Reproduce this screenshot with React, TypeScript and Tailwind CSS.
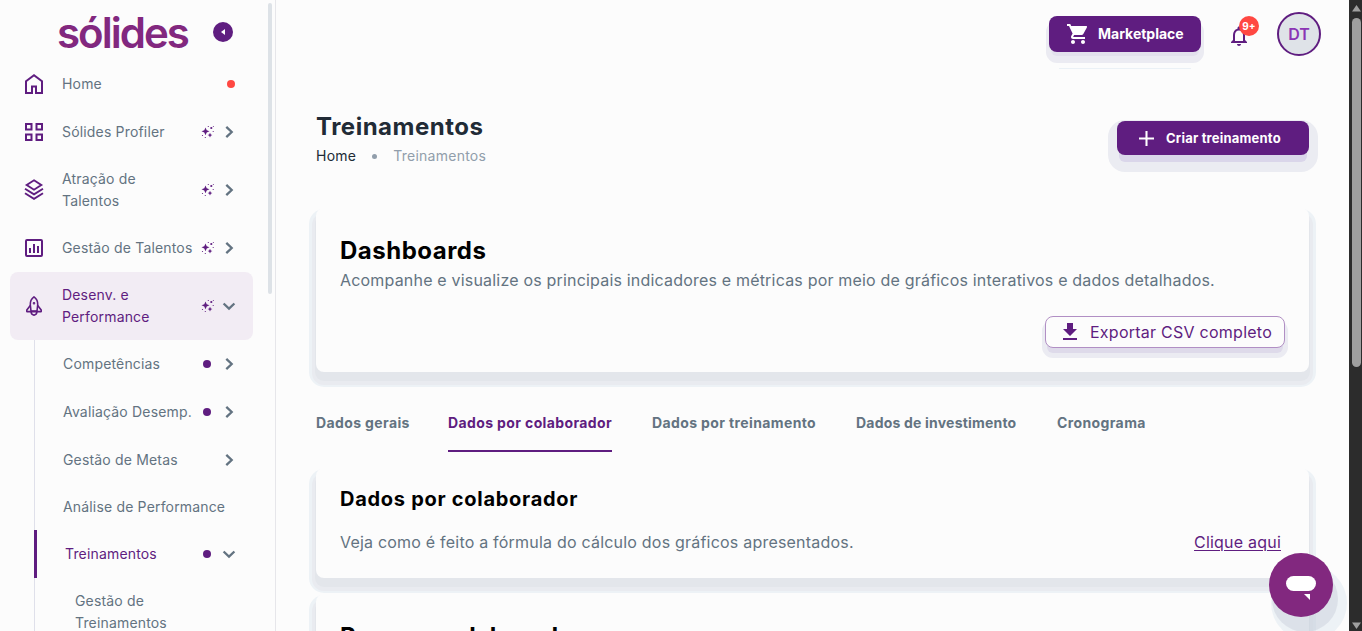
import type { ReactNode } from "react";
import { MdFileDownload, MdShoppingCart, MdOutlineNotifications } from "react-icons/md";

const PURPLE = "#5f1d80";

const CARD_SHADOW =
  "shadow-[0_8px_0_1px_#e3e6eb,0_9px_0_4px_#e9ebf0,0_8px_0_7px_#edf2f6]";

function MenuIcon({ children }: { children: ReactNode }) {
  return (
    <svg
      viewBox="0 0 24 24"
      width={24}
      height={24}
      fill="none"
      stroke={PURPLE}
      strokeWidth={2}
      className="shrink-0"
    >
      {children}
    </svg>
  );
}

const icons = {
  home: (
    <MenuIcon>
      <path d="M4 9.300 12 3.200l8 6.100V21h-6v-6.500h-4V21H4z" />
    </MenuIcon>
  ),
  grid: (
    <MenuIcon>
      <path d="M4 4h5.500v5.500H4zM14.500 4H20v5.500h-5.500zM4 14.500h5.500V20H4zM14.500 14.500H20V20h-5.500z" />
    </MenuIcon>
  ),
  layers: (
    <MenuIcon>
      <path d="M12 2.300 19.300 7 12 11.700 4.700 7z" strokeWidth={1.9} />
      <path d="M3 10.800 12 16.400l9-5.600M3 15.200 12 20.800l9-5.600" strokeWidth={1.9} />
    </MenuIcon>
  ),
  chart: (
    <MenuIcon>
      <rect x="4" y="4" width="16" height="16" rx="1" />
      <path d="M8 12v5M12 8v9M16 10v7" />
    </MenuIcon>
  ),
  rocket: (
    <MenuIcon>
      <g strokeWidth={1.6} strokeLinejoin="round">
        <path d="M12 2.800c-2.600 1.800-3.900 4.600-3.700 8L9 17h6l.7-6.200c.2-3.400-1.100-6.200-3.700-8z" />
        <path d="M8.300 11.500 4.800 16v1.600h14.400V16l-3.500-4.500M9 17.600c0 1.700 1 3.200 3 3.700 2-.5 3-2 3-3.700" />
        <circle cx="12" cy="9.200" r=".5" />
      </g>
    </MenuIcon>
  ),
};

function Sparkles() {
  return (
    <svg viewBox="0 0 14 14" width={14} height={14} fill={PURPLE} className="shrink-0">
      <path d="M4.500 2.400 5.700 5.300 8.500 6.300 5.700 7.400 4.500 10.200 3.300 7.400.5 6.300 3.300 5.300z" />
      <path d="M9 7.800l.8 1.600 1.600.7-1.600.7L9 12.400l-.8-1.600-1.600-.7 1.600-.7z" />
      <circle cx="10.300" cy="3" r="1.100" />
      <circle cx="7.300" cy="1.500" r=".6" />
      <circle cx="12.200" cy="6.500" r=".6" />
      <circle cx="1.500" cy="10.500" r=".6" />
      <circle cx="4.300" cy="12.500" r=".6" />
      <circle cx="12.300" cy="1.500" r=".5" />
    </svg>
  );
}

function Chevron({ open }: { open?: boolean }) {
  return (
    <svg
      viewBox="0 0 16 16"
      width={16}
      height={16}
      fill="none"
      stroke="#637381"
      strokeWidth={2.3}
      className="shrink-0"
    >
      <path d={open ? "M2.600 5.500 8 10.600l5.400-5.100" : "M5.300 2.800 10.700 8l-5.400 5.200"} />
    </svg>
  );
}

const menu = [
  { label: "Sólides Profiler", icon: icons.grid, h: "h-12" },
  { label: "Atração de Talentos", icon: icons.layers, h: "h-[68px]" },
  { label: "Gestão de Talentos", icon: icons.chart, h: "h-12" },
  { label: "Desenv. e Performance", icon: icons.rocket, h: "h-[68px]", active: true },
];

const submenu = [
  { label: "Competências", dot: true, chevron: true, h: "h-12" },
  { label: "Avaliação Desemp.", dot: true, chevron: true, h: "h-12" },
  { label: "Gestão de Metas", chevron: true, h: "h-12" },
  { label: "Análise de Performance", h: "h-[46px]" },
];

function Dot() {
  return <span className="mr-[3px] size-2 rounded-full bg-[#5f1d80]" />;
}

function Sidebar() {
  return (
    <aside className="relative h-full w-[276px] shrink-0 overflow-hidden border-r border-[#e6e6ea] text-sm leading-[22px] tracking-[0.17px] text-[#637381]">
      <div className="flex h-[60px] items-start pl-[58px]">
        <svg width={132} height={60} className="shrink-0 overflow-visible">
          <text
            x="-1"
            y="47.500"
            textLength="133"
            fontFamily="Inter, sans-serif"
            fontSize="42"
            fontWeight="600"
            fill="#82287f"
          >
            sólides
          </text>
        </svg>
        <span className="mt-[22px] ml-[23px] flex size-5 items-center justify-center rounded-full bg-[#5f1d80]">
          <svg viewBox="0 0 6 6" width={6} height={6} fill="#fff">
            <path d="M5 0v6L1 3z" />
          </svg>
        </span>
      </div>

      <nav className="px-[10px]">
        <div className="flex h-12 w-[243px] items-center pl-3">
          {icons.home}
          <span className="ml-4 flex-1">Home</span>
          <span className="mr-[18px] size-2 rounded-full bg-[#ff4842]" />
        </div>
        {menu.map((item) => (
          <div
            key={item.label}
            className={`flex w-[243px] items-center pl-3 pr-4 ${item.h} ${
              item.active ? "rounded-lg bg-[#f2ecf4] text-[#5f1d80]" : ""
            }`}
          >
            {item.icon}
            <span className={`ml-4 ${item.h === "h-12" ? "w-[139px] whitespace-nowrap" : "w-[100px] mr-[39px]"}`}>
              {item.label}
            </span>
            <Sparkles />
            <span className="ml-[6px]">
              <Chevron open={item.active} />
            </span>
          </div>
        ))}

        {/* Nested items */}
        <div className="ml-6 w-[219px] border-l border-[#dfe0ea]">
          {submenu.map((item) => (
            <div key={item.label} className={`flex items-center pl-7 pr-4 ${item.h}`}>
              <span className="flex-1 whitespace-nowrap">{item.label}</span>
              {item.dot && <Dot />}
              {item.chevron && (
                <span className="ml-[7px]">
                  <Chevron />
                </span>
              )}
            </div>
          ))}
          <div className="-ml-px flex h-12 items-center border-l-[3px] border-[#5f1d80] pl-7 pr-4 text-[#5f1d80]">
            <span className="flex-1">Treinamentos</span>
            <Dot />
            <span className="ml-[7px]">
              <Chevron open />
            </span>
          </div>
          <div className="flex h-[68px] items-center pl-10">
            <span className="w-[110px]">Gestão de Treinamentos</span>
          </div>
        </div>
      </nav>

      <span className="absolute top-[3px] right-[3px] h-[291px] w-1 rounded-full bg-[#dde2e7]" />
    </aside>
  );
}

function Header() {
  return (
    <header className="flex h-[68px] items-start justify-end pt-3 pr-7">
      <div className="mt-1 flex flex-col items-center">
        <button className="flex h-9 w-[152px] items-center rounded-lg bg-[#5f1d80] pl-[17px] text-sm font-bold text-white shadow-[0_6px_0_-2px_#e3e1ed,0_8px_0_3px_#ebebf2]">
          <MdShoppingCart size={24} />
          <span className="ml-2">Marketplace</span>
        </button>
        <span className="mt-4 h-px w-[132px] bg-[#ebf1f6]" />
      </div>
      <div className="relative mt-3 ml-[26px]">
        <MdOutlineNotifications size={24} color={PURPLE} />
        <span className="absolute -top-2 left-3 flex size-5 items-center justify-center rounded-full bg-[#ff4842] text-[10px] font-bold text-white">
          9+
        </span>
      </div>
      <div className="ml-[26px] flex size-11 items-center justify-center rounded-full border-2 border-[#5f1d80] bg-[#dfe3e8] text-base font-semibold text-[#8b35b5]">
        DT
      </div>
    </header>
  );
}

const tabs = [
  { label: "Dados gerais", w: "w-[92px]" },
  { label: "Dados por colaborador", w: "w-[164px]" },
  { label: "Dados por treinamento", w: "w-[164px]" },
  { label: "Dados de investimento", w: "w-[161px] tracking-[0.2px]" },
  { label: "Cronograma", w: "w-[89px]" },
];

export default function App() {
  return (
    <div className="flex h-[631px] w-full overflow-hidden bg-[#fcfcfc] font-['Inter',sans-serif]">
      <Sidebar />

      <div className="min-w-0 flex-1">
        <Header />
        <main className="px-10">
          {/* Title */}
          <div className="flex h-[140px] items-start justify-between pt-[43px]">
            <div>
              <h1 className="text-2xl leading-8 font-bold tracking-[0.5px] text-[#212b36]">Treinamentos</h1>
              <div className="mt-[2px] flex items-center text-sm leading-[22px] tracking-[0.25px]">
                <span className="text-[#212b36]">Home</span>
                <span className="ml-4 size-[5px] rounded-full bg-[#919eab]" />
                <span className="ml-4 text-[#919eab]">Treinamentos</span>
              </div>
            </div>
            <button className="mt-[10px] flex h-[34px] w-48 items-center rounded-lg bg-[#5f1d80] pl-[22px] text-[13px] font-bold tracking-[0.2px] text-white shadow-[0_9px_0_-2px_#dad6ea,0_8px_0_9px_#ebecf2]">
              <svg viewBox="0 0 16 16" width={15} height={15} stroke="#fff" strokeWidth={2.2}>
                <path d="M8 0v16M0 8h16" />
              </svg>
              <span className="mt-px ml-3">Criar treinamento</span>
            </button>
          </div>

          {/* Dashboards */}
          <section className={`flex h-[164px] flex-col rounded-lg bg-[#fcfcfc] px-6 pt-[27px] pb-6 ${CARD_SHADOW}`}>
            <h2 className="text-2xl leading-8 font-bold tracking-[0.5px] text-black">Dashboards</h2>
            <p className="mt-px leading-6 tracking-[0.19px] whitespace-nowrap text-[#637381]">
              Acompanhe e visualize os principais indicadores e métricas por meio de gráficos interativos e dados
              detalhados.
            </p>
            <button className="mt-auto flex h-8 w-60 shrink-0 items-center self-end rounded-lg border border-[#b18fc4] bg-[#fcfcfc] pl-3 tracking-[0.25px] whitespace-nowrap text-[#5f1d80] shadow-[0_7px_0_-2px_#dedaea,0_7px_0_3px_#ebebf2]">
              <MdFileDownload size={24} className="shrink-0" />
              <span className="ml-2">Exportar CSV completo</span>
            </button>
          </section>

          {/* Tabs */}
          <div className="mt-[22px] flex gap-10 text-sm font-bold tracking-[0.38px] whitespace-nowrap text-[#637381]">
            {tabs.map((tab, i) => (
              <div
                key={tab.label}
                className={`flex h-[58px] items-center border-b-2 pt-[2px] ${tab.w} ${
                  i === 1 ? "border-[#5f1d80] text-[#5f1d80]" : "border-transparent"
                }`}
              >
                {tab.label}
              </div>
            ))}
          </div>

          <section className={`mt-4 h-[110px] rounded-lg bg-[#fcfcfc] px-6 pt-4 ${CARD_SHADOW}`}>
            <h3 className="text-xl leading-[30px] font-bold tracking-[0.72px] text-black">Dados por colaborador</h3>
            <div className="mt-4 flex justify-between pr-1 leading-6 tracking-[0.21px]">
              <p className="text-[#637381]">Veja como é feito a fórmula do cálculo dos gráficos apresentados.</p>
              <a className="text-[#5f1d80] underline underline-offset-2">Clique aqui</a>
            </div>
          </section>

          <section className={`mt-4 h-[200px] rounded-lg bg-[#fcfcfc] px-6 pt-[25px] ${CARD_SHADOW}`}>
            <h2 className="text-2xl leading-9 font-bold text-black">Resumo colaborador</h2>
          </section>
        </main>
      </div>

      {/* Window scrollbar */}
      <div className="flex h-full w-[13px] shrink-0 flex-col items-center bg-[#2c2c2c]">
        <svg viewBox="0 0 9 7" width={9} height={7} fill="#9f9f9f" className="mt-[5px] ml-px">
          <path d="M4.500 0 9 6.500H0z" />
        </svg>
        <span className="mt-[6px] ml-px h-[349px] w-[9px] rounded-full bg-[#9f9f9f]" />
        <svg viewBox="0 0 9 7" width={9} height={7} fill="#9f9f9f" className="mt-auto mb-[2px] ml-px">
          <path d="M0 .5h9L4.500 7z" />
        </svg>
      </div>

      {/* Chat button */}
      <button className="absolute top-[553px] left-[1269px] flex size-16 items-center justify-center rounded-full bg-[#82287f] shadow-[4px_14px_0_1px_rgba(190,196,208,0.35),8px_18px_0_6px_rgba(214,228,238,0.4)] [clip-path:inset(-20px_-16px_-14px_-20px)]">
        <svg viewBox="0 0 64 64" width={64} height={64} fill="#fff">
          <rect x="17" y="23" width="30" height="15" rx="7.500" />
          <path d="M35 41h6v6z" />
        </svg>
      </button>
    </div>
  );
}
